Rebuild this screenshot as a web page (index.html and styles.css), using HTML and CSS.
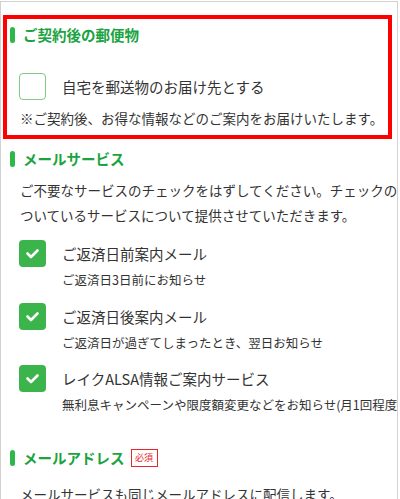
FILE: index.html
```html
<!DOCTYPE html>
<html lang="ja">
<head>
<meta charset="utf-8">
<link rel="stylesheet" href="styles.css">
</head>
<body>
<div class="frame">
  <div class="highlight">
    <h2 class="heading">ご契約後の郵便物</h2>
    <label class="mail-row">
      <span class="box"></span>
      <span class="mail-label">自宅を郵送物のお届け先とする</span>
    </label>
    <p class="note">※ご契約後、お得な情報などのご案内をお届けいたします。</p>
  </div>

  <h2 class="heading heading-service">メールサービス</h2>
  <div class="content">
    <p class="lead">ご不要なサービスのチェックをはずしてください。チェックのついているサービスについて提供させていただきます。</p>
    <ul class="services">
      <li class="service">
        <span class="box checked"><svg viewBox="0 0 27 27" width="27" height="27"><polyline points="8.5,13.5 12,17 18.5,10.5" fill="none" stroke="#fff" stroke-width="2.6" stroke-linecap="round" stroke-linejoin="round"/></svg></span>
        <div class="service-text">
          <div class="service-title">ご返済日前案内メール</div>
          <div class="service-sub">ご返済日3日前にお知らせ</div>
        </div>
      </li>
      <li class="service">
        <span class="box checked"><svg viewBox="0 0 27 27" width="27" height="27"><polyline points="8.5,13.5 12,17 18.5,10.5" fill="none" stroke="#fff" stroke-width="2.6" stroke-linecap="round" stroke-linejoin="round"/></svg></span>
        <div class="service-text">
          <div class="service-title">ご返済日後案内メール</div>
          <div class="service-sub">ご返済日が過ぎてしまったとき、翌日お知らせ</div>
        </div>
      </li>
      <li class="service">
        <span class="box checked"><svg viewBox="0 0 27 27" width="27" height="27"><polyline points="8.5,13.5 12,17 18.5,10.5" fill="none" stroke="#fff" stroke-width="2.6" stroke-linecap="round" stroke-linejoin="round"/></svg></span>
        <div class="service-text">
          <div class="service-title">レイクALSA情報ご案内サービス</div>
          <div class="service-sub">無利息キャンペーンや限度額変更などをお知らせ(月1回程度)</div>
        </div>
      </li>
    </ul>
  </div>

  <h2 class="heading heading-address">メールアドレス<span class="required">必須</span></h2>
  <div class="content">
    <p class="lead last">メールサービスも同じメールアドレスに配信します。</p>
  </div>
</div>
</body>
</html>
```

FILE: styles.css
```css
* { box-sizing: border-box; }
html, body {
  margin: 0;
  padding: 0;
  background: #fff;
}
body {
  font-family: "Noto Sans CJK JP", "Noto Sans", sans-serif;
  color: #333;
}
.frame {
  width: 398px;
  height: 498px;
  margin-top: 1px;
  border: 1px solid #d2d2d2;
  border-bottom: none;
  overflow: hidden;
}
.highlight {
  width: 389px;
  margin: 13px 0 0 2px;
  border: 4px solid #ff0000;
  padding: 8px 0 8px 3px;
}
.heading {
  display: flex;
  align-items: center;
  height: 16px;
  margin: 0;
  padding-left: 13px;
  position: relative;
  font-size: 14.5px;
  font-weight: bold;
  line-height: 16px;
  color: #1aa340;
  white-space: nowrap;
}
.heading::before {
  content: "";
  position: absolute;
  left: 0;
  top: 0;
  width: 5px;
  height: 16px;
  border-radius: 2.5px;
  background: #2cb84a;
}
.heading-service, .heading-address {
  margin-left: 9px;
}
.heading-service { margin-top: 12px; }
.heading-address { margin-top: 36px; }
.mail-row {
  display: flex;
  align-items: center;
  margin: 30px 0 0 9px;
}
.box {
  flex: none;
  display: block;
  width: 27px;
  height: 27px;
  border-radius: 4px;
  border: 1.5px solid #7fcb80;
  background: #fff;
}
.box.checked {
  border: none;
  background: #3bb54b;
}
.box svg { display: block; }
.mail-label {
  margin-left: 16px;
  font-size: 14.5px;
  line-height: 27px;
}
.note {
  margin: 9px 0 0 10px;
  font-size: 13.5px;
  line-height: 18px;
  white-space: nowrap;
}
.content {
  width: 405px;
  padding-left: 19px;
}
.lead {
  margin: 10.5px 0 0 0;
  font-size: 13.5px;
  line-height: 25px;
}
.lead.last { margin-top: 15.5px; }
.services {
  list-style: none;
  margin: 12.5px 0 0 -1px;
  padding: 0;
}
.service {
  display: flex;
  align-items: flex-start;
  margin-bottom: 13.5px;
}
.service:last-child { margin-bottom: 0; }
.service-text {
  margin-left: 16px;
}
.service-title {
  font-size: 14.5px;
  line-height: 27px;
  white-space: nowrap;
}
.service-sub {
  margin-top: 4px;
  font-size: 12.5px;
  line-height: 18px;
  white-space: nowrap;
}
.required {
  display: inline-block;
  margin-left: 6px;
  width: 27px;
  height: 18px;
  border: 1px solid #e8262a;
  color: #e8262a;
  font-size: 9px;
  font-weight: normal;
  line-height: 16px;
  text-align: center;
}
```
